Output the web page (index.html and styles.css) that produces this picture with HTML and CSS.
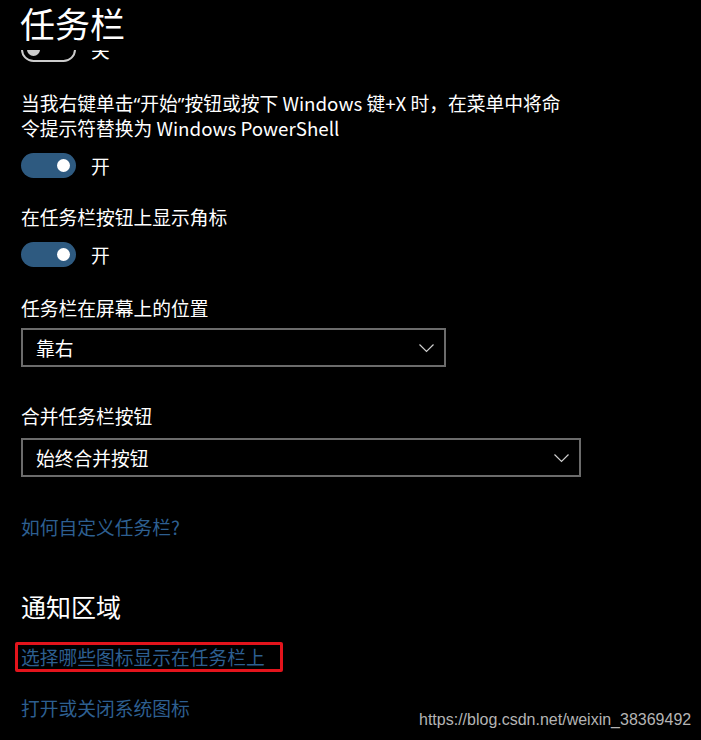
FILE: index.html
```html
<!DOCTYPE html>
<html lang="zh-CN">
<head>
<meta charset="utf-8">
<title>任务栏</title>
<link rel="stylesheet" href="styles.css">
</head>
<body>
<div class="page">
  <header class="header"><h1 class="title">任务栏</h1></header>
  <main class="viewport">
    <div class="content">
      <div class="toggle-row first">
        <span class="toggle off"><span class="knob"></span></span>
        <span class="state">关</span>
      </div>
      <p class="label para">当我右键单击<span class="q">“</span>开始<span class="q">”</span>按钮或按下 Windows 键+X 时，在菜单中将命<br>令提示符替换为 Windows PowerShell</p>
      <div class="toggle-row gap-s">
        <span class="toggle on"><span class="knob"></span></span>
        <span class="state">开</span>
      </div>
      <p class="label lbl-badge">在任务栏按钮上显示角标</p>
      <div class="toggle-row gap-s">
        <span class="toggle on"><span class="knob"></span></span>
        <span class="state">开</span>
      </div>
      <p class="label lbl-pos">任务栏在屏幕上的位置</p>
      <div class="select sel-pos">
        <span class="select-text">靠右</span>
        <svg class="chev" width="15" height="9" viewBox="0 0 15 9"><polyline points="0.5,0.5 7.5,7.5 14.5,0.5" fill="none" stroke="#cfcfcf" stroke-width="1.2"/></svg>
      </div>
      <p class="label lbl-combine">合并任务栏按钮</p>
      <div class="select sel-combine">
        <span class="select-text">始终合并按钮</span>
        <svg class="chev" width="15" height="9" viewBox="0 0 15 9"><polyline points="0.5,0.5 7.5,7.5 14.5,0.5" fill="none" stroke="#cfcfcf" stroke-width="1.2"/></svg>
      </div>
      <a class="link help">如何自定义任务栏?</a>
      <h2 class="section">通知区域</h2>
      <a class="link marked">选择哪些图标显示在任务栏上</a>
      <a class="link sys">打开或关闭系统图标</a>
    </div>
  </main>
  <div class="watermark">https://blog.csdn.net/weixin_38369492</div>
</div>
</body>
</html>
```

FILE: styles.css
```css
html, body {
  margin: 0;
  padding: 0;
  background: #000;
}
body {
  font-family: "Noto Sans CJK SC", "Noto Sans", sans-serif;
  color: #fff;
}
.page {
  position: relative;
  width: 701px;
  height: 740px;
  overflow: hidden;
  background: #000;
}
.header {
  height: 50px;
  overflow: hidden;
  padding-left: 20px;
}
.title {
  margin: 0;
  font-size: 35px;
  font-weight: 400;
  line-height: 46px;
}
.viewport {
  height: 690px;
  overflow: hidden;
}
.content {
  padding-left: 21px;
  display: flex;
  flex-direction: column;
  align-items: flex-start;
}
.toggle-row {
  display: flex;
  align-items: center;
  gap: 15px;
  height: 25px;
}
.toggle-row.first { margin-top: -13px; }
.toggle-row.gap-s { margin-top: 13px; }
.toggle {
  box-sizing: border-box;
  width: 55px;
  height: 25px;
  border-radius: 13px;
  display: flex;
  align-items: center;
}
.toggle.on {
  background: #2e5a80;
  justify-content: flex-end;
  padding-right: 6px;
}
.toggle.off {
  border: 2px solid #cccccc;
  justify-content: flex-start;
  padding-left: 4px;
}
.knob {
  width: 13px;
  height: 13px;
  border-radius: 50%;
  background: #fff;
}
.toggle.off .knob { background: #cccccc; }
.state {
  font-size: 18.75px;
  line-height: 25px;
}
.label {
  margin: 0;
  font-size: 18.75px;
  line-height: 25px;
  color: #fff;
  white-space: nowrap;
}
.q {
  font-family: "Noto Sans", "DejaVu Sans", sans-serif;
  line-height: 0;
}
.para { margin-top: 28px; height: 50px; }
.lbl-badge { margin-top: 26px; }
.lbl-pos { margin-top: 28px; }
.lbl-combine { margin-top: 36px; }
.select {
  box-sizing: border-box;
  height: 39px;
  border: 2px solid #6b6b6b;
  display: flex;
  align-items: center;
  justify-content: space-between;
  padding: 0 10px 0 13px;
}
.sel-pos { width: 425px; margin-top: 8px; }
.sel-combine { width: 560px; margin-top: 10px; }
.select-text {
  font-size: 18.75px;
  line-height: 25px;
}
.chev { display: block; margin-top: 1px; }
.link {
  font-size: 18.75px;
  line-height: 25px;
  color: #2d5f90;
  text-decoration: none;
  white-space: nowrap;
}
.help { margin-top: 37px; }
.section {
  margin: 50px 0 0 0;
  font-size: 25px;
  font-weight: 400;
  line-height: 34px;
}
.marked {
  margin-top: 19px;
  margin-left: -6px;
  border: 3px solid #e3141c;
  border-radius: 2px;
  padding: 0 15px 0 3px;
  line-height: 24px;
}
.sys { margin-top: 23px; }
.watermark {
  position: absolute;
  left: 419px;
  top: 710px;
  font-family: "Liberation Sans", Arial, sans-serif;
  font-size: 16px;
  line-height: 20px;
  color: #b4b4b4;
}
```
